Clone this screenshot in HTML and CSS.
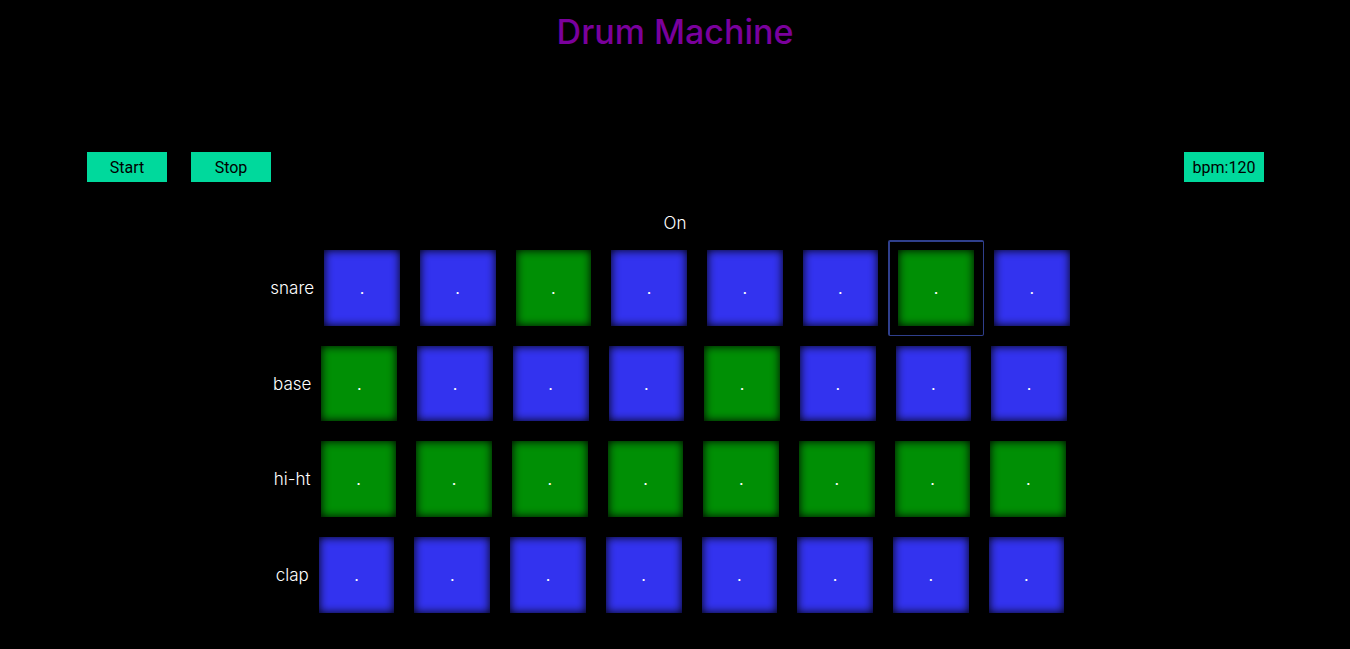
FILE: index.html
```html
<!DOCTYPE html>
<html lang="en">
<head>
<meta charset="utf-8">
<meta name="viewport" content="width=device-width, initial-scale=1">
<title>Drum Machine</title>
<link rel="stylesheet" href="styles.css">
</head>
<body>
<h1 class="title">Drum Machine</h1>
<div class="controls">
  <button type="button" class="control">Start</button>
  <button type="button" class="control">Stop</button>
  <button type="button" class="control tempo">bpm:120</button>
</div>
<main class="machine">
  <p class="status">On</p>
  <div class="track" role="group" aria-labelledby="snare">
    <span class="name" id="snare">snare</span>
    <div class="pads">
      <button type="button" class="pad"><span class="face">.</span></button>
      <button type="button" class="pad"><span class="face">.</span></button>
      <button type="button" class="pad active"><span class="face">.</span></button>
      <button type="button" class="pad"><span class="face">.</span></button>
      <button type="button" class="pad"><span class="face">.</span></button>
      <button type="button" class="pad"><span class="face">.</span></button>
      <button type="button" class="pad active selected"><span class="face">.</span></button>
      <button type="button" class="pad"><span class="face">.</span></button>
    </div>
  </div>
  <div class="track" role="group" aria-labelledby="base">
    <span class="name" id="base">base</span>
    <div class="pads">
      <button type="button" class="pad active"><span class="face">.</span></button>
      <button type="button" class="pad"><span class="face">.</span></button>
      <button type="button" class="pad"><span class="face">.</span></button>
      <button type="button" class="pad"><span class="face">.</span></button>
      <button type="button" class="pad active"><span class="face">.</span></button>
      <button type="button" class="pad"><span class="face">.</span></button>
      <button type="button" class="pad"><span class="face">.</span></button>
      <button type="button" class="pad"><span class="face">.</span></button>
    </div>
  </div>
  <div class="track" role="group" aria-labelledby="hi-ht">
    <span class="name" id="hi-ht">hi-ht</span>
    <div class="pads">
      <button type="button" class="pad active"><span class="face">.</span></button>
      <button type="button" class="pad active"><span class="face">.</span></button>
      <button type="button" class="pad active"><span class="face">.</span></button>
      <button type="button" class="pad active"><span class="face">.</span></button>
      <button type="button" class="pad active"><span class="face">.</span></button>
      <button type="button" class="pad active"><span class="face">.</span></button>
      <button type="button" class="pad active"><span class="face">.</span></button>
      <button type="button" class="pad active"><span class="face">.</span></button>
    </div>
  </div>
  <div class="track" role="group" aria-labelledby="clap">
    <span class="name" id="clap">clap</span>
    <div class="pads">
      <button type="button" class="pad"><span class="face">.</span></button>
      <button type="button" class="pad"><span class="face">.</span></button>
      <button type="button" class="pad"><span class="face">.</span></button>
      <button type="button" class="pad"><span class="face">.</span></button>
      <button type="button" class="pad"><span class="face">.</span></button>
      <button type="button" class="pad"><span class="face">.</span></button>
      <button type="button" class="pad"><span class="face">.</span></button>
      <button type="button" class="pad"><span class="face">.</span></button>
    </div>
  </div>
</main>
</body>
</html>
```

FILE: styles.css
```css
* {
  box-sizing: border-box;
}

body {
  margin: 0;
  background: #000;
  color: #fff;
  font: 17px/20px Inter, "Open Sans", sans-serif;
}

.title {
  margin: 0;
  padding: 12px 0 100px;
  color: #7a009c;
  font-size: 34px;
  font-weight: 500;
  line-height: 40px;
  text-align: center;
}

.controls {
  display: flex;
  gap: 24px;
  padding: 0 86px 0 87px;
}

.control {
  width: 80px;
  height: 30px;
  padding: 2px 0 0;
  border: 0;
  background: #00d99c;
  color: #000;
  font: 16px/20px Roboto, sans-serif;
}

.tempo {
  margin-left: auto;
}

.machine {
  padding-top: 31px;
}

.status {
  margin: 0 0 7px;
  font-weight: 300;
  text-align: center;
}

.track {
  display: flex;
  align-items: center;
  justify-content: center;
}

.name {
  font-weight: 300;
}

.pads {
  display: grid;
  grid-template-columns: repeat(8, 1fr);
  width: calc(45vw + 158px);
}

.pad {
  aspect-ratio: 1;
  min-width: 0;
  padding: 10px;
  border: 0;
  background: none;
  color: #fff;
  font: 16px/20px Inter, "Open Sans", sans-serif;
}

.face {
  display: flex;
  align-items: center;
  justify-content: center;
  height: 100%;
  background: #3333ef;
  box-shadow: inset 0 0 10px #000;
}

.active .face {
  background: #008f05;
}

.selected {
  padding: 8px 9px 9px 8px;
  border: 1px solid #2f3f8c;
  border-width: 2px 1px 1px 2px;
  border-radius: 2px;
}
```
